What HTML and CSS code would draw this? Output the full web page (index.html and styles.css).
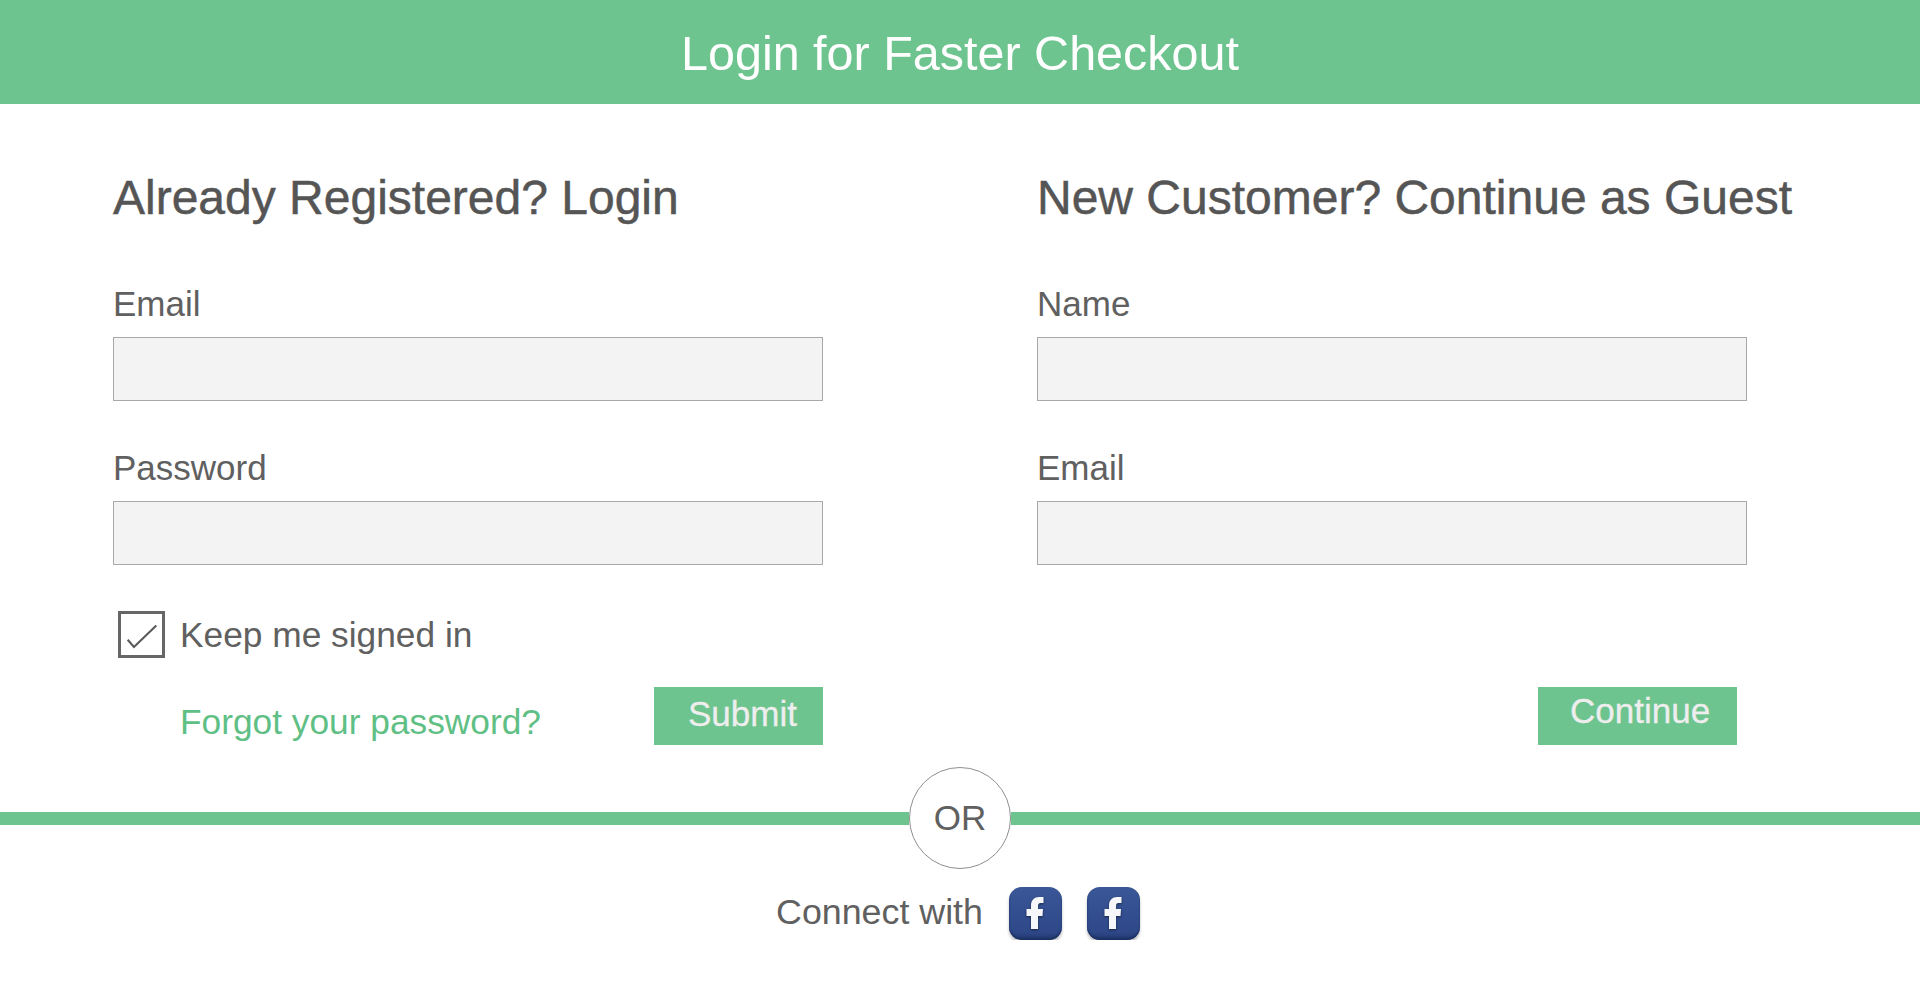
FILE: index.html
```html
<!DOCTYPE html>
<html lang="en">
<head>
    <meta charset="UTF-8">
    <title>Login for Faster Checkout</title>
    <link rel="stylesheet" href="styles.css">
</head>
<body>
    <header class="top-bar">Login for Faster Checkout</header>

    <div class="forms">
        <form class="form-col">
            <h2>Already Registered? Login</h2>
            <label class="field">
                <span>Email</span>
                <input type="text">
            </label>
            <label class="field">
                <span>Password</span>
                <input type="password">
            </label>
            <div class="keep-row">
                <span class="checkbox">
                    <svg viewBox="0 0 43 43" width="41" height="41"><path d="M7 27 L13.6 34.5 L37 12" fill="none" stroke="#5a5a5a" stroke-width="2.2"/></svg>
                </span>
                <span>Keep me signed in</span>
            </div>
            <div class="actions actions-login">
                <a class="forgot" href="#">Forgot your password?</a>
                <button type="button" class="btn btn-submit">Submit</button>
            </div>
        </form>

        <form class="form-col">
            <h2>New Customer? Continue as Guest</h2>
            <label class="field">
                <span>Name</span>
                <input type="text">
            </label>
            <label class="field">
                <span>Email</span>
                <input type="text">
            </label>
            <div class="actions actions-guest">
                <button type="button" class="btn btn-continue">Continue</button>
            </div>
        </form>
    </div>

    <div class="or-row">
        <div class="rule"></div>
        <div class="or-circle">OR</div>
        <div class="rule"></div>
    </div>

    <div class="connect">
        <span class="connect-text">Connect with</span>
        <a class="fb-icon" href="#">
            <svg viewBox="0 0 53 53" width="53" height="53"><path d="M22 42 V29 H17.5 V22 H22 V18.5 C22 13 25.5 10 30 10 H34.5 V16 H31.5 C29.8 16 29 17 29 19 V22 H34 L33.5 29 H29 V42 Z" fill="#f6f7fa"/></svg>
        </a>
        <a class="fb-icon" href="#">
            <svg viewBox="0 0 53 53" width="53" height="53"><path d="M22 42 V29 H17.5 V22 H22 V18.5 C22 13 25.5 10 30 10 H34.5 V16 H31.5 C29.8 16 29 17 29 19 V22 H34 L33.5 29 H29 V42 Z" fill="#f6f7fa"/></svg>
        </a>
    </div>
</body>
</html>
```

FILE: styles.css
```css
body {
    margin: 0;
    background-color: white;
    font-family: "Liberation Sans", Arial, sans-serif;
    color: #606060;
}
.top-bar {
    box-sizing: border-box;
    height: 104px;
    padding-top: 1px;
    line-height: 104px;
    background-color: #6ec48e;
    color: white;
    font-size: 48.5px;
    text-align: center;
}
.forms {
    display: grid;
    grid-template-columns: 924px 1fr;
    padding: 60px 0 0 113px;
}
.form-col {
    width: 710px;
}
h2 {
    margin: 0 0 54px;
    height: 68px;
    line-height: 68px;
    font-size: 48px;
    font-weight: normal;
    color: #555555;
    white-space: nowrap;
    -webkit-text-stroke: 0.5px #555555;
}
.field {
    display: block;
}
.field + .field {
    margin-top: 49px;
}
.field span {
    display: block;
    height: 51px;
    line-height: 35px;
    font-size: 35px;
}
.field input {
    display: block;
    box-sizing: border-box;
    width: 710px;
    height: 64px;
    margin: 0;
    border: 1px solid #a9a9a9;
    border-radius: 0;
    background-color: #f3f3f3;
}
.keep-row {
    display: flex;
    align-items: center;
    gap: 15px;
    height: 47px;
    margin: 46px 0 0 5px;
    font-size: 35.3px;
}
.checkbox {
    display: flex;
    justify-content: center;
    align-items: center;
    box-sizing: border-box;
    width: 47px;
    height: 47px;
    border: 3px solid #666666;
}
.actions {
    display: flex;
    align-items: center;
    justify-content: space-between;
}
.actions-login {
    margin-top: 29px;
    padding-left: 67px;
}
.actions-guest {
    justify-content: flex-end;
    margin-top: 122px;
    padding-right: 10px;
}
.forgot {
    padding-top: 12px;
    color: #5fbf85;
    font-size: 35.3px;
    text-decoration: none;
}
.btn {
    height: 58px;
    margin: 0;
    border: none;
    border-radius: 0;
    background-color: #6ec48e;
    color: #eeeeee;
    font-family: inherit;
    font-size: 35px;
    text-align: left;
    -webkit-text-stroke: 0.3px #eeeeee;
}
.btn-submit {
    width: 169px;
    padding: 0 0 5px 34px;
}
.btn-continue {
    width: 199px;
    padding: 0 0 11px 32px;
}
.or-row {
    display: flex;
    align-items: center;
    margin-top: 22px;
}
.rule {
    flex: 1;
    height: 13px;
    background-color: #6ec48e;
}
.or-circle {
    box-sizing: border-box;
    width: 102px;
    height: 102px;
    line-height: 100px;
    border: 1px solid #8f8f8f;
    border-radius: 50%;
    font-size: 35px;
    text-align: center;
}
.connect {
    display: flex;
    align-items: center;
    justify-content: center;
    margin-top: 18px;
    padding-right: 4px;
}
.connect-text {
    margin-right: 26px;
    padding-bottom: 2px;
    font-size: 35.8px;
}
.fb-icon {
    width: 53px;
    height: 53px;
    margin-right: 25px;
    border-radius: 13px;
    background: linear-gradient(#3a5797, #2e4888 85%, #22386f);
    box-shadow: inset 0 -2px 2px #1d3062, 0 3px 3px rgba(0,0,0,0.25);
}
.fb-icon:last-child {
    margin-right: 0;
}
.fb-icon svg {
    display: block;
    filter: drop-shadow(0 1px 1px rgba(0,0,0,0.5));
}
```
